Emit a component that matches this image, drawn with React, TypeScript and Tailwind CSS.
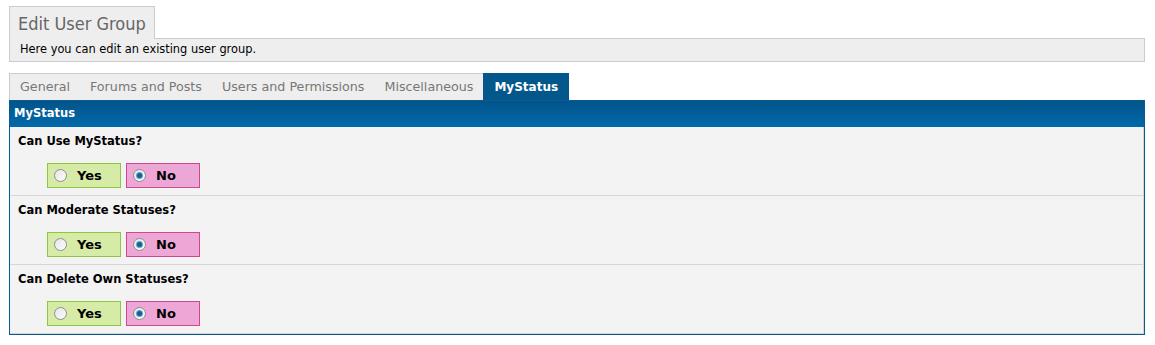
import React from "react";

const font = { fontFamily: '"DejaVu Sans", Verdana, sans-serif' };
const titleFont = { fontFamily: '"DejaVu Sans Condensed", "DejaVu Sans", sans-serif' };

const tabs = ["General", "Forums and Posts", "Users and Permissions", "Miscellaneous"];

const settings = [
  { label: "Can Use MyStatus?", value: "no" },
  { label: "Can Moderate Statuses?", value: "no" },
  { label: "Can Delete Own Statuses?", value: "no" },
];

const Radio = ({ checked }: { checked: boolean }) => (
  <span className="relative inline-block h-[13px] w-[13px] rounded-full border border-[#8f8f8f] bg-gradient-to-br from-[#e6e6e6] to-[#fbfbfb]">
    {checked && (
      <span className="absolute left-[3px] top-[3px] h-[5px] w-[5px] rounded-full bg-[#1f5c8a] shadow-[0_0_0_1px_#5da6d8]"></span>
    )}
  </span>
);

const YesNo = ({ value }: { value: string }) => (
  <div className="flex gap-[5px] pl-[37px]">
    <label className="flex h-[25px] w-[74px] items-center border border-[#8dc63f] bg-[#d6eba5] pl-[6px]">
      <Radio checked={value === "yes"} />
      <span className="ml-[10px] text-[13px] font-bold text-black">Yes</span>
    </label>
    <label className="flex h-[25px] w-[74px] items-center border border-[#d0498e] bg-[#eca7d6] pl-[6px]">
      <Radio checked={value === "no"} />
      <span className="ml-[10px] text-[13px] font-bold text-black">No</span>
    </label>
  </div>
);

export default function App() {
  return (
    <div className="min-h-[345px] bg-white pl-[9px] pr-[10px] pt-[6px]" style={font}>
      {/* page title */}
      <div className="flex">
        <div className="-mb-px flex h-[33px] items-center border border-b-0 border-[#cccccc] bg-[#eeeeee] px-[8px]">
          <h1 className="text-[18px] text-[#666666]" style={titleFont}>
            Edit User Group
          </h1>
        </div>
      </div>
      <div className="flex h-[24px] items-center border border-[#cccccc] bg-[#eeeeee] pl-[10px] text-[11.4px] text-black">
        Here you can edit an existing user group.
      </div>

      {/* tabs */}
      <div className="mt-[11px] flex h-[27px]">
        <div className="flex border-l border-t border-[#cccccc] bg-[#eeeeee]">
          {tabs.map((t) => (
            <div key={t} className="flex items-center px-[10px] text-[12.7px] text-[#777777]">
              {t}
            </div>
          ))}
        </div>
        <div className="flex items-center bg-[#03578b] px-[11px] text-[12px] font-bold text-white">MyStatus</div>
      </div>

      {/* panel */}
      <div className="border border-[#0a5b8f]">
        <div className="flex h-[26px] items-center bg-gradient-to-b from-[#02548a] to-[#006aab] pl-[4px] text-[11.5px] font-bold text-white">
          MyStatus
        </div>
        <div className="border-b border-r border-[#d4d4d4] bg-[#f3f3f3]">
          {settings.map((s, i) => (
            <div
              key={s.label}
              className={i < settings.length - 1 ? "h-[69px] border-b border-[#d6d6d6] pt-[7px]" : "h-[68px] pt-[7px]"}
            >
              <div className="pl-[8px] text-[11.5px] font-bold leading-[15px] text-black">{s.label}</div>
              <div className="mt-[14px]">
                <YesNo value={s.value} />
              </div>
            </div>
          ))}
        </div>
      </div>
    </div>
  );
}
